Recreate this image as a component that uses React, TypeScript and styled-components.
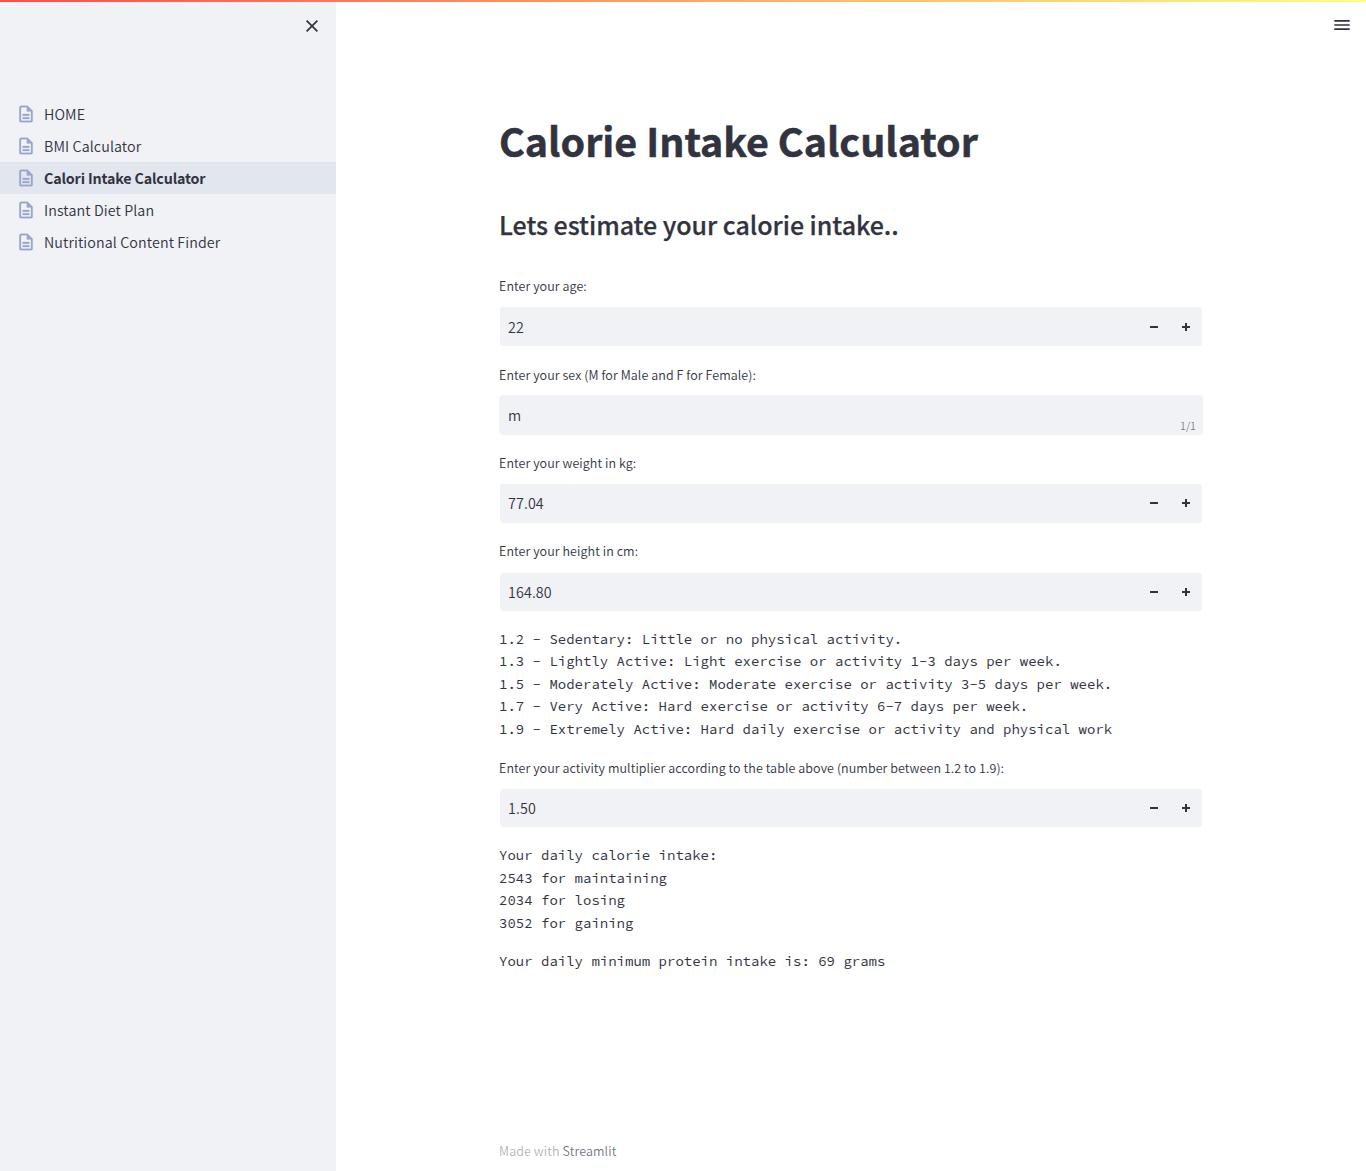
import React from 'react';
import styled, { createGlobalStyle } from 'styled-components';

const sans = `"Source Sans Pro", "Noto Sans CJK SC", "Noto Sans CJK JP", sans-serif`;
const mono = `"Source Code Pro", "Noto Sans Mono CJK SC", "Noto Sans Mono CJK JP", "Liberation Mono", monospace`;
const ink = '#31333f';
const panel = '#f0f2f6';

const GlobalStyle = createGlobalStyle`
  *, *::before, *::after { box-sizing: border-box; }
  body { margin: 0; background: #fff; color: ${ink}; font-family: ${sans}; font-weight: 350; overflow: hidden; }
  button, input { font: inherit; color: inherit; }
`;

const Page = styled.div`
  display: flex;
  height: 1171px;
  position: relative;
`;

const Decoration = styled.div`
  position: absolute;
  inset: 0 0 auto 0;
  height: 2px;
  background: linear-gradient(90deg, #ff4b4b, #fffd80);
`;

const Sidebar = styled.aside`
  width: 336px;
  flex: none;
  background: ${panel};
  display: flex;
  flex-direction: column;
`;

const SidebarTop = styled.div`
  height: 98px;
  display: flex;
  justify-content: flex-end;
  padding: 16px 14px 0 0;
`;

const IconButton = styled.button`
  border: 0;
  padding: 0;
  background: none;
  width: 20px;
  height: 20px;
  display: flex;
  align-items: center;
  justify-content: center;
`;

const Nav = styled.ul`
  list-style: none;
  margin: 0;
  padding: 0;
`;

const NavItem = styled.li<{ $active?: boolean }>`
  height: 32px;
  padding-left: 16px;
  display: flex;
  align-items: center;
  gap: 8px;
  font-size: 14.3px;
  line-height: 24px;
  white-space: nowrap;
  background: ${p => (p.$active ? '#e2e6ee' : 'transparent')};
  font-weight: ${p => (p.$active ? 700 : 350)};
  letter-spacing: ${p => (p.$active ? '-0.17px' : '0.1px')};
`;

const Main = styled.main`
  flex: 1;
  display: flex;
  flex-direction: column;
  min-width: 0;
`;

const Toolbar = styled.header`
  height: 96px;
  flex: none;
  display: flex;
  justify-content: flex-end;
  padding: 15px 14px 0 0;
`;

const Content = styled.section`
  width: 704px;
  margin: 0 auto;
  flex: 1;
  display: flex;
  flex-direction: column;
  gap: 16px;
`;

const Title = styled.h1`
  margin: 0;
  padding: 18px 0;
  font-size: 39.4px;
  line-height: 52.8px;
  font-weight: 700;
  -webkit-text-stroke: 0.5px ${ink};
  white-space: nowrap;
`;

const Subtitle = styled.h3`
  margin: 0;
  padding: 7.5px 0 16.7px;
  font-size: 25px;
  line-height: 33.5px;
  font-weight: 500;
  letter-spacing: -0.03px;
  -webkit-text-stroke: 0.25px ${ink};
  white-space: nowrap;
`;

const Field = styled.div`
  display: flex;
  flex-direction: column;
`;

const Label = styled.label`
  height: 32px;
  padding-top: 0.7px;
  font-size: 12.5px;
  line-height: 22.4px;
  letter-spacing: 0.08px;
  white-space: nowrap;
`;

const InputBox = styled.div<{ $inset?: boolean }>`
  height: 40.4px;
  border: ${p => (p.$inset ? '1px solid transparent' : '0')};
  padding: ${p => (p.$inset ? '0 0 0 8px' : '0 7px 0 9px')};
  border-radius: 4px;
  background: ${panel};
  background-clip: padding-box;
  display: flex;
  align-items: center;
`;

const Input = styled.input`
  flex: 1;
  min-width: 0;
  border: 0;
  padding: 0 0 1px;
  background: none;
  outline: none;
  height: 24px;
  font-size: 14.3px;
  letter-spacing: 0.12px;
`;

const Step = styled.button`
  width: 32px;
  height: 100%;
  border: 0;
  padding: 0;
  background: none;
  display: flex;
  align-items: center;
  justify-content: center;
`;

const Counter = styled.span`
  align-self: flex-end;
  font-size: 10.7px;
  line-height: 18px;
  color: rgba(49, 51, 63, 0.65);
`;

const Mono = styled.pre`
  margin: 0;
  font-family: ${mono};
  font-weight: 400;
  font-size: 14px;
  line-height: 22.4px;
`;

const Footer = styled.footer`
  width: 704px;
  margin: 0 auto;
  padding-bottom: 9px;
  font-size: 12.5px;
  line-height: 22px;
  letter-spacing: 0.1px;
  color: rgba(49, 51, 63, 0.4);
`;

const FooterLink = styled.a`
  color: rgba(49, 51, 63, 0.7);
`;

const DocIcon = () => (
  <svg width="20" height="20" viewBox="0 0 24 24" fill="#98a7c9" stroke="#98a7c9" strokeWidth="0.3">
    <path d="M14 2H6c-1.1 0-2 .9-2 2v16c0 1.1.9 2 2 2h12c1.1 0 2-.9 2-2V8l-6-6zM6 20V4h7v5h5v11H6z" />
    <path d="M8 12h8v2H8zM8 16h8v2H8z" />
  </svg>
);

const CloseIcon = () => (
  <svg width="20" height="20" viewBox="0 0 20 20" fill="none" stroke={ink} strokeWidth="1.7">
    <path d="M4.6 4.6 15.4 15.4M15.4 4.6 4.6 15.4" />
  </svg>
);

const MenuIcon = () => (
  <svg width="20" height="20" viewBox="0 0 20 20" fill={ink}>
    <path d="M2.3 5h15.4v1.7H2.3zM2.3 9.15h15.4v1.7H2.3zM2.3 13.3h15.4V15H2.3z" />
  </svg>
);

const MinusIcon = () => (
  <svg width="8" height="8" viewBox="0 0 8 8" fill={ink}>
    <path d="M0 3h8v2H0z" />
  </svg>
);

const PlusIcon = () => (
  <svg width="8" height="8" viewBox="0 0 8 8" fill={ink}>
    <path d="M0 3h3V0h2v3h3v2H5v3H3V5H0z" />
  </svg>
);

const NumberField = ({ label, value }: { label: string; value: string }) => (
  <Field>
    <Label>{label}</Label>
    <InputBox $inset>
      <Input defaultValue={value} />
      <Step aria-label="Decrement"><MinusIcon /></Step>
      <Step aria-label="Increment"><PlusIcon /></Step>
    </InputBox>
  </Field>
);

const pages = ['HOME', 'BMI Calculator', 'Calori Intake Calculator', 'Instant Diet Plan', 'Nutritional Content Finder'];

const activityTable = `1.2 - Sedentary: Little or no physical activity.
1.3 - Lightly Active: Light exercise or activity 1-3 days per week.
1.5 - Moderately Active: Moderate exercise or activity 3-5 days per week.
1.7 - Very Active: Hard exercise or activity 6-7 days per week.
1.9 - Extremely Active: Hard daily exercise or activity and physical work`;

const calorieResult = `Your daily calorie intake:
2543 for maintaining
2034 for losing
3052 for gaining`;

export default function App() {
  return (
    <Page>
      <GlobalStyle />
      <Sidebar>
        <SidebarTop>
          <IconButton aria-label="Close sidebar"><CloseIcon /></IconButton>
        </SidebarTop>
        <Nav>
          {pages.map((name, i) => (
            <NavItem key={name} $active={i === 2}>
              <DocIcon />
              {name}
            </NavItem>
          ))}
        </Nav>
      </Sidebar>
      <Main>
        <Toolbar>
          <IconButton aria-label="Menu"><MenuIcon /></IconButton>
        </Toolbar>
        <Content>
          <Title>Calorie Intake Calculator</Title>
          <Subtitle>Lets estimate your calorie intake..</Subtitle>
          <NumberField label="Enter your age:" value="22" />
          <Field>
            <Label>Enter your sex (M for Male and F for Female):</Label>
            <InputBox>
              <Input defaultValue="m" />
              <Counter>1/1</Counter>
            </InputBox>
          </Field>
          <NumberField label="Enter your weight in kg:" value="77.04" />
          <NumberField label="Enter your height in cm:" value="164.80" />
          <Mono>{activityTable}</Mono>
          <NumberField
            label="Enter your activity multiplier according to the table above (number between 1.2 to 1.9):"
            value="1.50"
          />
          <Mono>{calorieResult}</Mono>
          <Mono>Your daily minimum protein intake is: 69 grams</Mono>
        </Content>
        <Footer>
          Made with <FooterLink>Streamlit</FooterLink>
        </Footer>
      </Main>
      <Decoration />
    </Page>
  );
}
